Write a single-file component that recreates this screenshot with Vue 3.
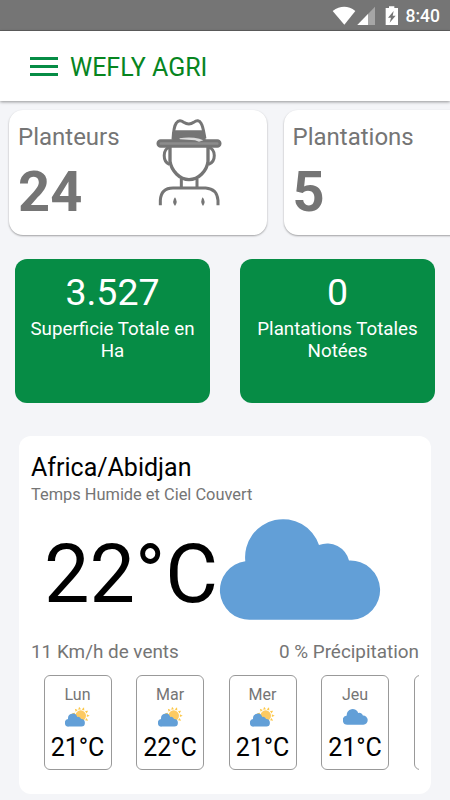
<template>
  <div class="page">
    <div class="status">
      <svg class="statusIcons" viewBox="90 15 204 63">
        <path d="M95 33 Q130 8 163 33 L130 74 Z" fill="#fff" />
        <path d="M169 75 L222 20 V75 Z" fill="#a6a6a6" />
        <path d="M169 75 L201 42 V75 Z" fill="#fff" />
        <path d="M254 24 H264 V19 H280 V24 H291 V75 H254 Z" fill="#fff" />
        <path d="M278 33 L261 53 H270 L266 68 L284 47 H275 Z" fill="#757575" />
      </svg>
      <span class="time">8:40</span>
    </div>

    <header class="header">
      <button class="menu" aria-label="menu">
        <i></i>
        <i></i>
        <i></i>
      </button>
      <h1>WEFLY AGRI</h1>
    </header>

    <div class="counters">
      <div v-for="item in counters" :key="item.label" class="counter">
        <div class="counterText">
          <p class="counterLabel">{{ item.label }}</p>
          <p class="counterValue">{{ item.value }}</p>
        </div>
        <svg v-if="item.farmer" class="farmer" viewBox="30 35 204 270">
          <g fill="none" stroke="#757575" stroke-width="9" stroke-linejoin="round">
            <path d="M84 103 C85 80 88 61 94 53 C101 43 109 46 116 51 Q132 61 146 51 C155 44 163 44 169 55 C175 65 177 86 180 100" />
            <rect x="39" y="106" width="186" height="17" rx="8" fill="#8c8c8c" />
            <path d="M75 122 V168 C79 196 104 223 132 223 C161 223 186 196 189 168 V122" stroke-width="10" />
            <path d="M73 126 C53 132 52 168 73 177" />
            <path d="M191 126 C213 132 214 168 191 177" />
            <path d="M109 220 V245 M156 220 V245" />
            <path d="M46 300 V285 Q48 248 84 248 H182 Q216 250 219 285 V300" />
          </g>
          <path d="M87 75 H178 L182 104 H82 Z" fill="#757575" />
          <path d="M103 99 Q135 94 163 100 L175 105 L162 109 L150 105 L105 102 Z" fill="#ddd" />
          <path d="M90 276 Q100 289 90 302 Q79 289 90 276 Z" fill="#757575" />
          <path d="M173 276 Q184 289 174 302 Q164 289 173 276 Z" fill="#757575" />
        </svg>
      </div>
    </div>

    <div class="totals">
      <div v-for="item in totals" :key="item.label" class="total">
        <p class="totalValue">{{ item.value }}</p>
        <p class="totalLabel">{{ item.label }}</p>
      </div>
    </div>

    <section class="weather">
      <h2>Africa/Abidjan</h2>
      <p class="sky">Temps Humide et Ciel Couvert</p>
      <div class="now">
        <span class="temp">22°C</span>
        <svg class="cloud" viewBox="0 0 161 101">
          <path :d="cloudPath" fill="#629fd7" />
        </svg>
      </div>
      <div class="details">
        <span>11 Km/h de vents</span>
        <span>0 % Précipitation</span>
      </div>
      <div class="days">
        <div v-for="day in days" :key="day.name" class="day">
          <p class="dayName">{{ day.name }}</p>
          <svg v-if="day.sunny" class="dayIcon" viewBox="0 0 75 60">
            <path :d="rayPath" fill="#fcc84a" />
            <circle cx="47" cy="26" r="16" fill="#fdca62" />
            <path transform="translate(0 20) scale(.375 .386)" :d="cloudPath" fill="#629fd7" />
          </svg>
          <svg v-else class="dayIcon" viewBox="0 0 75 60">
            <path transform="translate(0 6) scale(.466)" :d="cloudPath" fill="#629fd7" />
          </svg>
          <p class="dayTemp">{{ day.temp }}°C</p>
        </div>
        <!-- bord du jour suivant -->
        <div class="day"></div>
      </div>
    </section>
  </div>
</template>

<script setup>
const counters = [
  { label: "Planteurs", value: 24, farmer: true },
  { label: "Plantations", value: 5, farmer: false },
];

const totals = [
  { value: "3.527", label: "Superficie Totale en Ha" },
  { value: "0", label: "Plantations Totales Notées" },
];

const days = [
  { name: "Lun", temp: 21, sunny: true },
  { name: "Mar", temp: 22, sunny: true },
  { name: "Mer", temp: 21, sunny: true },
  { name: "Jeu", temp: 21, sunny: false },
];

const cloudPath =
  "M29.5 100.7 A29.4 29.4 0 0 1 24.3 42.2 A37.95 37.95 0 0 1 98 26 A22.5 22.5 0 0 1 128 41.6 A29.5 29.5 0 0 1 131 100.7 Z";

// rayons du soleil
const rayPath = [-165, -130, -100, -68, -34, 0, 34]
  .map((deg) => {
    const point = (r, d) => {
      const a = ((deg + d) * Math.PI) / 180;
      return `${(47 + r * Math.cos(a)).toFixed(1)} ${(26 + r * Math.sin(a)).toFixed(1)}`;
    };
    return `M${point(19, -13)} L${point(27, 0)} L${point(19, 13)} Z`;
  })
  .join(" ");
</script>

<style>
body {
  margin: 0;
  background-color: #f4f5f8;
}
</style>

<style scoped>
.page {
  width: 450px;
  height: 800px;
  overflow: hidden;
  background-color: #f4f5f8;
  font-family: Roboto, "Liberation Sans", sans-serif;
  color: #757575;
}
p,
h1,
h2 {
  margin: 0;
  font-weight: 400;
}

.status {
  box-sizing: border-box;
  height: 31px;
  padding: 5px 10px 0 0;
  display: flex;
  justify-content: flex-end;
  background-color: #757575;
  border-bottom: 1px solid #606060;
}
.statusIcons {
  width: 68px;
  height: 21px;
  margin-right: 7px;
}
.time {
  color: #fff;
  font-size: 17.5px;
  font-weight: 500;
  line-height: 23px;
}

.header {
  position: relative;
  height: 70px;
  display: flex;
  align-items: center;
  background-color: #fff;
  box-shadow: 0 1px 3px rgba(0, 0, 0, 0.4);
}
.menu {
  display: flex;
  flex-direction: column;
  gap: 5px;
  margin: 0 12.3px 0 29.7px;
  padding: 0;
  border: 0;
  background: none;
}
.menu i {
  width: 28px;
  height: 3px;
  background-color: #068c45;
}
.header h1 {
  padding-top: 4px;
  color: #07851f;
  font-size: 25px;
  line-height: 30px;
}

.counters {
  display: flex;
  gap: 17px;
  padding: 9px 0 0 9px;
}
.counter {
  flex: none;
  box-sizing: border-box;
  display: flex;
  width: 257.5px;
  height: 125px;
  padding-left: 9px;
  border-radius: 14px;
  background-color: #fff;
  box-shadow: 0 1px 2px rgba(0, 0, 0, 0.35);
}
.counterText {
  width: 137px;
}
.counterLabel {
  padding-top: 12.5px;
  font-size: 24px;
  line-height: 28px;
}
.counterValue {
  padding-top: 8px;
  font-size: 56px;
  font-weight: 700;
  line-height: 66px;
}
.farmer {
  width: 68px;
  height: 90px;
  margin-top: 7px;
}

.totals {
  display: flex;
  gap: 30px;
  padding: 24px 15px 0;
}
.total {
  box-sizing: border-box;
  width: 195px;
  height: 144px;
  padding: 11px 10px 0;
  border-radius: 12px;
  background-color: #068c45;
  color: #fff;
  text-align: center;
}
.totalValue {
  font-size: 37.5px;
  line-height: 44px;
}
.totalLabel {
  padding-top: 4px;
  font-size: 18.75px;
  line-height: 22.3px;
}

.weather {
  box-sizing: border-box;
  height: 358px;
  margin: 33px 19px 0;
  padding: 17px 12px 0;
  border-radius: 12px;
  background-color: #fff;
}
.weather h2 {
  color: #000;
  font-size: 25px;
  line-height: 30px;
}
.sky {
  padding-top: 2px;
  font-size: 16.4px;
  line-height: 20px;
}
.now {
  display: flex;
  align-items: flex-start;
  height: 134.5px;
  padding-left: 13px;
}
.temp {
  width: 176.5px;
  padding-top: 23px;
  color: #000;
  font-size: 81px;
  line-height: 94px;
}
.cloud {
  width: 161px;
  height: 101px;
  margin-top: 13.8px;
  overflow: visible;
}
.details {
  display: flex;
  justify-content: space-between;
  font-size: 18.9px;
  line-height: 24px;
}
.days {
  display: flex;
  gap: 24.5px;
  margin-top: 11.5px;
  padding-left: 12.5px;
  overflow: hidden;
}
.day {
  flex: none;
  box-sizing: border-box;
  display: flex;
  flex-direction: column;
  align-items: center;
  width: 68px;
  height: 95px;
  padding-top: 8.5px;
  border: 1px solid #999;
  border-radius: 6px;
}
.dayName {
  font-size: 16px;
  line-height: 20px;
}
.dayIcon {
  width: 25px;
  height: 20px;
  margin-top: 2px;
}
.dayTemp {
  padding-top: 6px;
  color: #000;
  font-size: 25px;
  line-height: 30px;
}
</style>
